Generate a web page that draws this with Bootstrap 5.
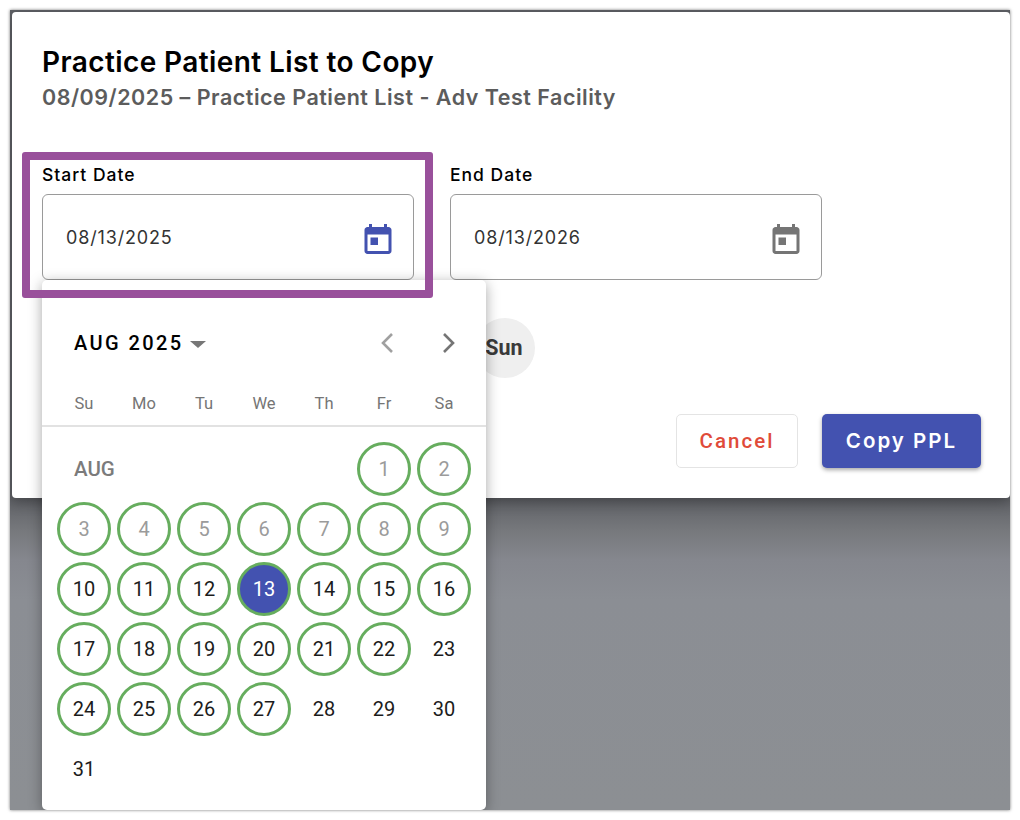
<!DOCTYPE html>
<html lang="en">
<head>
  <meta charset="UTF-8">
  <title>Practice Patient List to Copy</title>
  <link href="https://cdn.jsdelivr.net/npm/bootstrap@5.3.0/dist/css/bootstrap.min.css" rel="stylesheet">
  <style>
    html, body { height: 820px; overflow: hidden; background: #fff; }
    body { font-family: "Inter", "Liberation Sans", sans-serif; color: #000; padding: 10px; }
    .shot { position: relative; width: 1000px; height: 800px; overflow: hidden;
      background: linear-gradient(#5f6166 488px, #76787c 520px, #85878e 550px, #8b8e94 590px, #8c8f93 100%); box-shadow: 0 0 3px rgba(0,0,0,.55); }
    .dlg { position: relative; margin: 2px 0 0 2px; width: 998px; height: 486px; background: #fff; border-radius: 4px;
      box-shadow: 0 4px 14px rgba(0,0,0,.3); padding: 32px 30px 0; }
    .dlg-title { font-size: 28px; line-height: 36px; font-weight: 600; letter-spacing: .4px; margin: 0; }
    .dlg-sub { font-size: 21.5px; line-height: 30px; font-weight: 600; letter-spacing: .5px; color: #5c5c5c; margin: 2px 0 0; }
    .fields { margin-top: 50px; gap: 36px; }
    .fld { width: 372px; }
    .fld-label { font-size: 17.5px; line-height: 24px; font-weight: 500; letter-spacing: 1px; margin-bottom: 7px; padding-top: 1px; }
    .fld-box { height: 86px; border: 1px solid #9a9a9a; border-radius: 6px; padding: 0 17px 0 23px; }
    .fld-val { font-size: 18px; color: #333; letter-spacing: .85px; }
    .cal-ico { width: 36px; height: 36px; margin-top: 4px; }
    .sun-chip { position: absolute; left: 463px; top: 306px; width: 60px; height: 60px; border-radius: 50%; padding-right: 2px;
      background: #efefef; font-family: "Roboto", sans-serif; font-weight: 700; font-size: 21.5px; color: #3a3a3a; }
    .dlg-actions { position: absolute; right: 29px; top: 402px; gap: 24px; }
    .btn-cancel, .btn-copy { height: 54px; border-radius: 5px; font-size: 20.5px; font-weight: 600; letter-spacing: 2px; padding: 0; }
    .btn-cancel { width: 122px; background: #fff; color: #e04b3a; border: 1px solid #e4e4e4; font-family: "Roboto", sans-serif; font-weight: 500; }
    .btn-copy { width: 159px; background: #4352b0; color: #fff; border: 0; box-shadow: 0 2px 4px rgba(0,0,0,.35); }
    .focus-box { position: absolute; left: 12px; top: 142px; width: 411px; height: 146px; border: 8px solid #99509b; border-radius: 3px; pointer-events: none; z-index: 3; }
    .picker { position: absolute; left: 32px; top: 270px; width: 444px; height: 530px; background: #fff; border-radius: 5px;
      box-shadow: 0 3px 14px rgba(0,0,0,.35); z-index: 2; font-family: "Roboto", sans-serif; }
    .pick-head { height: 100px; padding: 26px 27px 0 32px; }
    .pick-month { font-size: 20px; font-weight: 500; letter-spacing: 2.4px; }
    .pick-caret { width: 0; height: 0; border-left: 8px solid transparent; border-right: 8px solid transparent; border-top: 7px solid #777; margin-left: 7px; margin-top: 3px; }
    .pick-nav { gap: 38px; }
    .week-row { display: grid; grid-template-columns: repeat(7, 60px); padding: 0 12px; height: 47px; border-bottom: 2px solid #e2e2e2; }
    .week-row span { text-align: center; font-size: 16.5px; line-height: 47px; color: #757575; }
    .days { display: grid; grid-template-columns: repeat(7, 60px); grid-auto-rows: 60px; padding: 12px 12px 0; }
    .day-cell { display: flex; align-items: center; justify-content: center; font-size: 20px; color: #1c1c1c; }
    .day-cell.open { border: 3px solid #66ad5e; border-radius: 50%; width: 54px; height: 54px; margin: 3px; }
    .day-cell.past { color: #9b9b9b; }
    .day-cell.chosen { background: #4352b0; color: #fff; }
    .month-tag { grid-column: span 5; display: flex; align-items: center; padding-left: 20px; font-size: 20.5px; font-weight: 500; color: #7b7b7b; }
  </style>
</head>
<body>
  <div class="shot">
    <div class="dlg">
      <h1 class="dlg-title">Practice Patient List to Copy</h1>
      <p class="dlg-sub">08/09/2025 – Practice Patient List - Adv Test Facility</p>
      <div class="d-flex fields">
        <div class="fld">
          <div class="fld-label">Start Date</div>
          <div class="fld-box d-flex align-items-center justify-content-between">
            <span class="fld-val">08/13/2025</span>
            <svg class="cal-ico" viewBox="0 0 24 24" fill="#4352b0"><path d="M19 4h-1V2h-2v2H8V2H6v2H5c-1.100 0-2 .9-2 2v14c0 1.100.9 2 2 2h14c1.100 0 2-.9 2-2V6c0-1.100-.9-2-2-2zm0 16H5V9h14v11zM7 11h5v5H7z"/></svg>
          </div>
        </div>
        <div class="fld">
          <div class="fld-label">End Date</div>
          <div class="fld-box d-flex align-items-center justify-content-between">
            <span class="fld-val">08/13/2026</span>
            <svg class="cal-ico" viewBox="0 0 24 24" fill="#757575"><path d="M19 4h-1V2h-2v2H8V2H6v2H5c-1.100 0-2 .9-2 2v14c0 1.100.9 2 2 2h14c1.100 0 2-.9 2-2V6c0-1.100-.9-2-2-2zm0 16H5V9h14v11zM7 11h5v5H7z"/></svg>
          </div>
        </div>
      </div>
      <div class="sun-chip d-flex align-items-center justify-content-center">Sun</div>
      <div class="d-flex dlg-actions">
        <button class="btn btn-cancel" type="button">Cancel</button>
        <button class="btn btn-copy" type="button">Copy PPL</button>
      </div>
    </div>
    <div class="focus-box"></div>
    <div class="picker">
      <div class="pick-head d-flex align-items-center justify-content-between">
        <div class="d-flex align-items-center"><span class="pick-month">AUG 2025</span><span class="pick-caret"></span></div>
        <div class="d-flex pick-nav">
          <svg width="22" height="22" viewBox="0 0 22 22" fill="none" stroke="#a0a0a0" stroke-width="2.6"><path d="M15 2 6 11l9 9"/></svg>
          <svg width="22" height="22" viewBox="0 0 22 22" fill="none" stroke="#757575" stroke-width="2.6"><path d="m7 2 9 9-9 9"/></svg>
        </div>
      </div>
      <div class="week-row"><span>Su</span><span>Mo</span><span>Tu</span><span>We</span><span>Th</span><span>Fr</span><span>Sa</span></div>
      <div class="days" id="days"></div>
    </div>
  </div>
  <script src="https://cdn.jsdelivr.net/npm/bootstrap@5.3.0/dist/js/bootstrap.bundle.min.js"></script>
  <script>
    const days = document.getElementById('days');
    days.innerHTML = '<div class="month-tag">AUG</div>';
    for (let d = 1; d <= 31; d++) {
      const cell = document.createElement('div');
      cell.className = 'day-cell';
      if (d <= 22 || (d >= 24 && d <= 27)) cell.classList.add('open');
      if (d < 10) cell.classList.add('past');
      if (d === 13) cell.classList.add('chosen');
      cell.textContent = d;
      days.appendChild(cell);
    }
  </script>
</body>
</html>
